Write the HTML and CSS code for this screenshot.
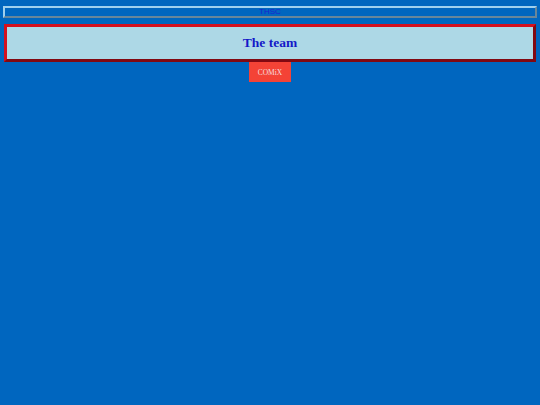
FILE: index.html
```html
<!DOCTYPE html>
<html>
<head>
<meta charset="utf-8">
<link rel="stylesheet" href="styles.css">
</head>
<body>
<div class="page">
  <div class="topbar">THSC</div>
  <div class="header"><h1 class="title">The team</h1></div>
  <div class="btnrow"><a class="btn">COMiX</a></div>
</div>
</body>
</html>
```
FILE: styles.css
```css
html, body {
  margin: 0;
  padding: 0;
  background: #0066bf;
  height: 100%;
}
.page {
  padding: 6px 3px 0 3px;
  font-family: "Liberation Serif", serif;
}
.topbar {
  height: 8px;
  border: 2px outset #9fd0ee;
  color: #1a22d0;
  font-family: "Liberation Sans", sans-serif;
  font-size: 8px;
  line-height: 8px;
  text-align: center;
}
.header {
  margin: 6px 1px 0 1px;
  height: 32px;
  border: 3px outset #d5101e;
  background: #add8e6;
  display: flex;
  align-items: center;
  justify-content: center;
}
.title {
  margin: 0;
  font-size: 13.5px;
  font-weight: bold;
  color: #1418c8;
}
.btnrow {
  display: flex;
  justify-content: center;
}
.btn {
  width: 42px;
  height: 20px;
  background: #f44336;
  color: #f6dede;
  font-size: 7.5px;
  display: flex;
  align-items: center;
  justify-content: center;
}
```
